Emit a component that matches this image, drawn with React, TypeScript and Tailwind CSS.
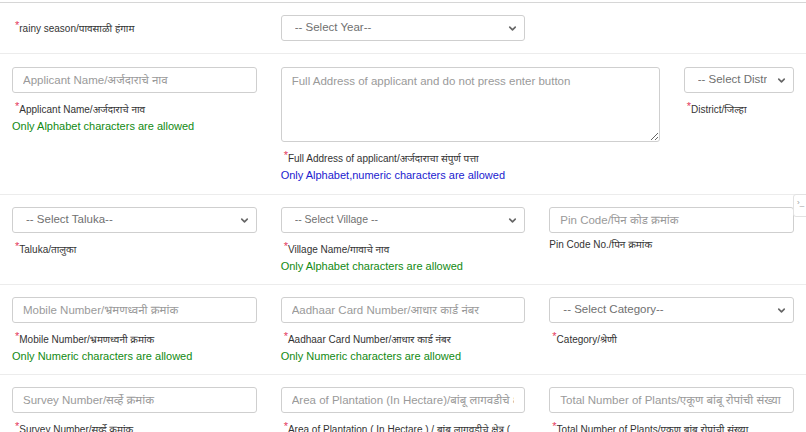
import { ChevronDown } from 'lucide-react'

const font = { fontFamily: '"Liberation Sans", Arial, "Noto Sans Devanagari", "Noto Sans", sans-serif' }

function Req({ children }: { children: React.ReactNode }) {
  return (
    <div className="mt-[9px] pl-[3px] text-[10px] leading-[15px] text-[#333]">
      <span className="relative top-[-3px] text-[11px] text-[#e4385c]">*</span>
      {children}
    </div>
  )
}

function Hint({ children, blue }: { children: React.ReactNode; blue?: boolean }) {
  return (
    <div className={`text-[11px] leading-[18px] ${blue ? 'text-[#1b1bcf]' : 'text-[#128a12]'}`}>
      {children}
    </div>
  )
}

function TextBox({ placeholder }: { placeholder: string }) {
  return (
    <input
      placeholder={placeholder}
      className="block h-[26px] w-full rounded-[3px] border border-[#cfcfcf] bg-white px-[10px] text-[11.5px] text-[#555] outline-none placeholder:text-[#9a9a9a]"
      style={font}
    />
  )
}

function Dropdown({ label, small }: { label: string; small?: boolean }) {
  return (
    <div className="relative">
      <select
        className={`block h-[26px] w-full appearance-none rounded-[3px] border border-[#cfcfcf] bg-white pl-[13px] pr-[26px] text-[#707070] outline-none ${small ? 'text-[10.5px]' : 'text-[11.5px]'}`}
        style={font}
      >
        <option>{label}</option>
      </select>
      <ChevronDown className="pointer-events-none absolute right-[7px] top-[8px] h-[11px] w-[11px] text-[#666]" strokeWidth={3.5} />
    </div>
  )
}

export default function App() {
  return (
    <div className="relative h-[432px] w-[806px] overflow-hidden bg-white" style={font}>
      <div className="h-[3px] border-b border-[#d6d6d6]" />

      {/* season */}
      <div className="grid h-[51px] grid-cols-12 items-center border-b border-[#ececec]">
        <div className="col-span-4 px-[12px]">
          <div className="pl-[3px] text-[10px] text-[#333]">
            <span className="relative top-[-3px] text-[11px] text-[#e4385c]">*</span>rainy season/पावसाळी हंगाम
          </div>
        </div>
        <div className="col-span-4 px-[12px]">
          <Dropdown label="-- Select Year--" />
        </div>
      </div>

      {/* applicant */}
      <div className="grid h-[141px] grid-cols-12 border-b border-[#ececec] pt-[13px]">
        <div className="col-span-4 px-[12px]">
          <TextBox placeholder="Applicant Name/अर्जदाराचे नाव" />
          <Req>Applicant Name/अर्जदाराचे नाव</Req>
          <Hint>Only Alphabet characters are allowed</Hint>
        </div>
        <div className="col-span-6 px-[12px]">
          <textarea
            placeholder="Full Address of applicant and do not press enter button"
            className="block h-[75px] w-full rounded-[3px] border border-[#cfcfcf] bg-white px-[10px] py-[5px] text-[11.5px] text-[#555] outline-none placeholder:text-[#9a9a9a]"
            style={font}
          />
          <Req>Full Address of applicant/अर्जदाराचा संपुर्ण पत्ता</Req>
          <Hint blue>Only Alphabet,numeric characters are allowed</Hint>
        </div>
        <div className="col-span-2 px-[12px]">
          <Dropdown label="-- Select District--" />
          <Req>District/जिल्हा</Req>
        </div>
      </div>

      {/* location */}
      <div className="grid h-[90px] grid-cols-12 border-b border-[#ececec] pt-[12px]">
        <div className="col-span-4 px-[12px]">
          <Dropdown label="-- Select Taluka--" />
          <Req>Taluka/तालुका</Req>
        </div>
        <div className="col-span-4 px-[12px]">
          <Dropdown label="-- Select Village --" small />
          <Req>Village Name/गावाचे नाव</Req>
          <Hint>Only Alphabet characters are allowed</Hint>
        </div>
        <div className="col-span-4 px-[12px]">
          <TextBox placeholder="Pin Code/पिन कोड क्रमांक" />
          <div className="mt-[4px] text-[10px] leading-[15px] text-[#333]">Pin Code No./पिन क्रमांक</div>
        </div>
      </div>

      {/* contact */}
      <div className="grid h-[90px] grid-cols-12 border-b border-[#ececec] pt-[12px]">
        <div className="col-span-4 px-[12px]">
          <TextBox placeholder="Mobile Number/भ्रमणध्वनी क्रमांक" />
          <Req>Mobile Number/भ्रमणध्वनी क्रमांक</Req>
          <Hint>Only Numeric characters are allowed</Hint>
        </div>
        <div className="col-span-4 px-[12px]">
          <TextBox placeholder="Aadhaar Card Number/आधार कार्ड नंबर" />
          <Req>Aadhaar Card Number/आधार कार्ड नंबर</Req>
          <Hint>Only Numeric characters are allowed</Hint>
        </div>
        <div className="col-span-4 px-[12px]">
          <Dropdown label="-- Select Category--" />
          <Req>Category/श्रेणी</Req>
        </div>
      </div>

      {/* plantation */}
      <div className="grid grid-cols-12 pt-[12px]">
        <div className="col-span-4 px-[12px]">
          <TextBox placeholder="Survey Number/सर्व्हे क्रमांक" />
          <Req>Survey Number/सर्व्हे क्रमांक</Req>
        </div>
        <div className="col-span-4 px-[12px]">
          <TextBox placeholder="Area of Plantation (In Hectare)/बांबू लागवडीचे क्षेत्र" />
          <Req>Area of Plantation ( In Hectare ) / बांबू लागवडीचे क्षेत्र ( हेक्टर )</Req>
        </div>
        <div className="col-span-4 px-[12px]">
          <TextBox placeholder="Total Number of Plants/एकूण बांबू रोपांची संख्या" />
          <Req>Total Number of Plants/एकूण बांबू रोपांची संख्या</Req>
        </div>
      </div>

      <div className="absolute left-[793px] top-[194px] h-[23px] w-[20px] rounded-[3px] border border-[#e2e2e2] bg-white pl-[3px] pt-[4px] text-[8px] leading-none text-[#999]">
        ›_
      </div>
    </div>
  )
}
